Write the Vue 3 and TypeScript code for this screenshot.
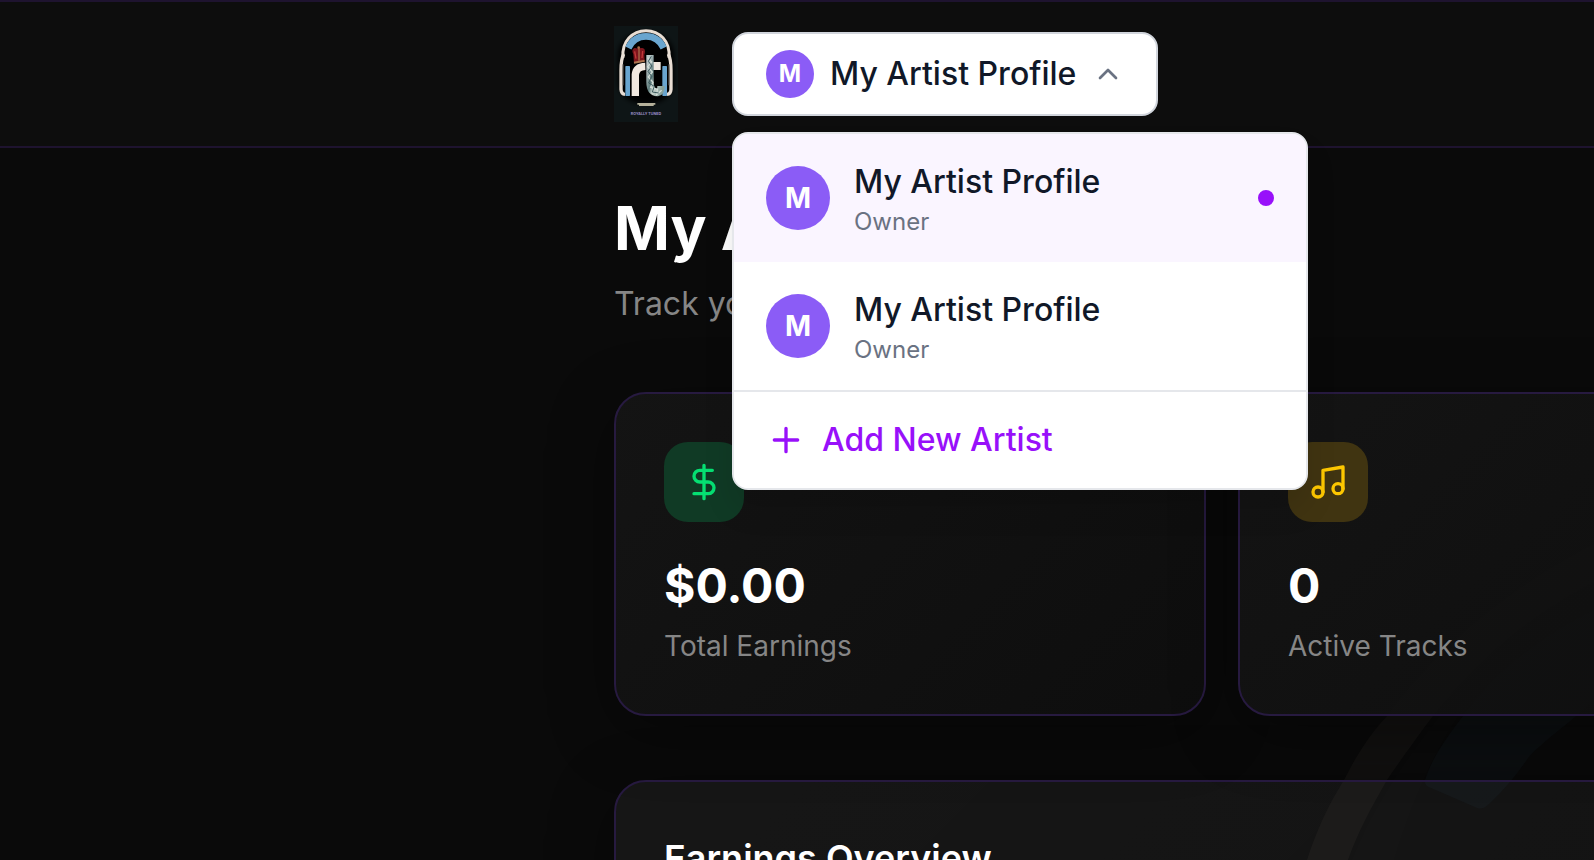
<script setup lang="ts">
import { ref } from 'vue'

interface Artist {
  id: number
  name: string
  role: string
}

const artists: Artist[] = [
  { id: 1, name: 'My Artist Profile', role: 'Owner' },
  { id: 2, name: 'My Artist Profile', role: 'Owner' },
]

const selectedId = ref(1)
const open = ref(true)

const stats = [
  { key: 'earnings', value: '$0.00', label: 'Total Earnings' },
  { key: 'tracks', value: '0', label: 'Active Tracks' },
]

function choose(id: number) {
  selectedId.value = id
  open.value = false
}
</script>

<template>
  <div class="page">
    <svg class="watermark" viewBox="0 0 500 400" aria-hidden="true">
      <path class="mark-cream" d="M213 400C226 360 240 336 250 320C264 292 278 272 293 256C340 192 410 130 500 84V122C430 158 378 206 339 256C318 284 304 304 293 320C276 350 264 372 254 400Z" />
      <path class="mark-shade" d="M300 400C318 340 340 292 364 256L346 256C318 292 282 340 258 400Z" />
      <path class="mark-blue" d="M369 256C352 278 338 298 331 320Q330 326 337 328L383 348Q389 350 395 344C410 330 425 312 434 298C450 280 475 264 500 240V150C440 180 400 214 369 256Z" />
    </svg>

    <header class="topbar">
      <svg class="logo" viewBox="0 0 192 288" role="img" aria-label="Royally Tuned">
        <defs>
          <linearGradient id="silver" x1="0" y1="0" x2="1" y2="1">
            <stop offset="0" stop-color="#b9c5c6" />
            <stop offset="0.4" stop-color="#5d7b7b" />
            <stop offset="0.6" stop-color="#cbd6cf" />
            <stop offset="1" stop-color="#86a09a" />
          </linearGradient>
          <filter id="soft" x="-20%" y="-20%" width="140%" height="140%">
            <feGaussianBlur stdDeviation="8" />
          </filter>
        </defs>
        <rect width="192" height="288" fill="#0e1516" />
        <rect x="12" y="20" width="168" height="212" rx="70" fill="#000" filter="url(#soft)" />
        <path d="M27 96C22 46 56 14 96 14S170 46 165 96" fill="none" stroke="#e9ded4" stroke-width="9" />
        <path d="M43 66C54 42 72 31 96 31S138 42 149 66" fill="none" stroke="#69a5cf" stroke-width="20" />
        <path d="M29 84C20 100 21 120 21 140V190Q22 204 33 205" fill="none" stroke="#e9ded4" stroke-width="10" />
        <path d="M163 84C172 100 171 120 171 140V190Q170 204 159 205" fill="none" stroke="#e9ded4" stroke-width="10" />
        <path d="M27 115V178M165 115V178" stroke="#6b655f" stroke-width="3" />
        <rect x="34" y="120" width="14" height="90" rx="2" fill="#69a5cf" />
        <rect x="145" y="120" width="14" height="90" rx="2" fill="#69a5cf" />
        <path d="M64 210V146Q66 122 94 121" fill="none" stroke="#f1e8df" stroke-width="22" />
        <rect x="117" y="108" width="23" height="24" fill="#f1e8df" />
        <path d="M108 87V168Q108 199 131 200Q141 199 141 180" fill="none" stroke="url(#silver)" stroke-width="22" />
        <path d="M101 95L113 108L101 122L115 138L103 153L117 169L110 184L130 190L128 206L143 193" fill="none" stroke="#d2ddd7" stroke-width="4" />
        <path d="M112 91L103 106L114 120L102 136L113 151L104 171L121 181L115 198L134 201" fill="none" stroke="#3d5b5e" stroke-width="3" />
        <path d="M58 84C50 68 62 62 70 68Q74 60 80 67C92 62 96 76 91 86L92 106L60 112Z" fill="#7d151c" />
        <path d="M62 76L66 98M86 75L84 96" stroke="#c2383a" stroke-width="4" />
        <path d="M75 68V104" stroke="#a66e4c" stroke-width="4" />
        <path d="M60 110L92 104" stroke="#ad7550" stroke-width="6" />
        <circle cx="74" cy="65" r="4" fill="#a66e4c" />
        <path d="M70 231H124V236H119V240H75V236H70Z" fill="#b5b19b" />
        <text x="96" y="267" text-anchor="middle" class="logo-name">ROYALLY TUNED</text>
      </svg>

      <div class="switcher">
        <button class="trigger" type="button" aria-haspopup="true" :aria-expanded="open" @click="open = !open">
          <span class="avatar small">M</span>
          <span>My Artist Profile</span>
          <svg class="chevron" viewBox="0 0 24 24" aria-hidden="true"><path d="m18 15-6-6-6 6" /></svg>
        </button>

        <div v-if="open" class="menu">
          <button
            v-for="artist in artists"
            :key="artist.id"
            type="button"
            class="option"
            :class="{ selected: artist.id === selectedId }"
            @click="choose(artist.id)"
          >
            <span class="avatar">M</span>
            <span class="who">
              <span class="name">{{ artist.name }}</span>
              <span class="role">{{ artist.role }}</span>
            </span>
            <span v-if="artist.id === selectedId" class="dot"></span>
          </button>
          <button class="add" type="button">
            <svg viewBox="0 0 24 24" aria-hidden="true"><path d="M5 12h14M12 5v14" /></svg>
            <span>Add New Artist</span>
          </button>
        </div>
      </div>
    </header>

    <main class="content">
      <h1>My Artist Profile</h1>
      <p class="intro">Track your earnings</p>

      <section class="stats">
        <article v-for="stat in stats" :key="stat.key" class="card stat">
          <div class="badge" :class="stat.key">
            <svg v-if="stat.key === 'earnings'" viewBox="0 0 24 24" aria-hidden="true">
              <path d="M12 2v20M17 5H9.5a3.5 3.5 0 0 0 0 7h5a3.5 3.5 0 0 1 0 7H6" />
            </svg>
            <svg v-else viewBox="0 0 24 24" aria-hidden="true">
              <path d="M9 18V5l12-2v13" />
              <circle cx="6" cy="18" r="3" />
              <circle cx="18" cy="16" r="3" />
            </svg>
          </div>
          <p class="value">{{ stat.value }}</p>
          <p class="label">{{ stat.label }}</p>
        </article>
      </section>

      <section class="card overview">
        <h2>Earnings Overview</h2>
      </section>
    </main>
  </div>
</template>

<style>
body {
  background: #090909;
}
</style>

<style scoped>
* {
  box-sizing: border-box;
}

.page {
  --gutter: 614px;
  position: relative;
  height: 100vh;
  overflow: hidden;
  background: #0a0a0a;
  color: #fff;
  font-family: Inter, 'Liberation Sans', sans-serif;
  font-size: 32px;
  line-height: 48px;
}

h1,
h2,
p {
  margin: 0;
}

button {
  border: 0;
  margin: 0;
  font: inherit;
  text-align: left;
  cursor: pointer;
}

.watermark {
  position: absolute;
  right: 0;
  bottom: 0;
  width: 500px;
  height: 400px;
}

.mark-cream {
  fill: rgba(255, 240, 200, 0.035);
}

.mark-shade {
  fill: rgba(255, 255, 255, 0.008);
}

.mark-blue {
  fill: rgba(100, 180, 240, 0.03);
}

.topbar {
  position: relative;
  z-index: 2;
  display: flex;
  align-items: center;
  gap: 54px;
  padding: 24px 0 24px var(--gutter);
  border-top: 2px solid #1e132f;
  border-bottom: 2px solid #1e132f;
  background: #0d0d0d;
}

.logo {
  width: 64px;
  height: 96px;
}

.logo-name {
  fill: #9a8ec6;
  font-size: 11px;
  font-weight: 700;
}

.switcher {
  position: relative;
}

.trigger {
  display: flex;
  align-items: center;
  gap: 16px;
  padding: 16px 32px;
  border: 2px solid #d1d5dc;
  border-radius: 16px;
  background: #fff;
  color: #101828;
  font-weight: 500;
}

.chevron {
  width: 32px;
  height: 32px;
  fill: none;
  stroke: #6a7282;
  stroke-width: 2;
  stroke-linecap: round;
  stroke-linejoin: round;
}

.avatar {
  display: flex;
  align-items: center;
  justify-content: center;
  flex: none;
  width: 64px;
  height: 64px;
  border-radius: 50%;
  background: #8b5cf6;
  color: #fff;
  font-size: 28px;
  font-weight: 700;
}

.avatar.small {
  width: 48px;
  height: 48px;
  font-size: 24px;
}

.menu {
  position: absolute;
  top: calc(100% + 16px);
  left: 0;
  width: 576px;
  overflow: hidden;
  border: 2px solid #e5e7eb;
  border-radius: 16px;
  background: #fff;
  box-shadow: 0 20px 30px rgba(0, 0, 0, 0.1);
}

.option,
.add {
  display: flex;
  align-items: center;
  width: 100%;
  padding: 24px 32px;
  background: #fff;
}

.option {
  gap: 24px;
}

.option.selected {
  background: #faf5ff;
}

.who {
  display: flex;
  flex: 1;
  flex-direction: column;
}

.name {
  color: #101828;
  font-weight: 500;
}

.role {
  color: #6a7282;
  font-size: 24px;
  line-height: 32px;
}

.dot {
  width: 16px;
  height: 16px;
  border-radius: 50%;
  background: #9810fa;
}

.add {
  gap: 16px;
  border-top: 2px solid #e5e7eb;
  color: #9810fa;
  font-weight: 500;
}

.add svg {
  width: 40px;
  height: 40px;
  fill: none;
  stroke: currentColor;
  stroke-width: 2;
  stroke-linecap: round;
}

.content {
  position: relative;
  z-index: 1;
  padding: 44px 0 0 var(--gutter);
}

h1 {
  font-size: 60px;
  font-weight: 700;
  line-height: 72px;
}

.intro {
  margin-top: 16px;
  color: #868686;
}

.stats {
  display: grid;
  grid-template-columns: repeat(2, 592px);
  gap: 32px;
  margin-top: 64px;
}

.card {
  padding: 48px;
  border: 2px solid #271a40;
  border-radius: 32px;
  background: linear-gradient(135deg, rgba(255, 255, 255, 0.05), rgba(255, 255, 255, 0.03));
  box-shadow: 0 16px 64px rgba(0, 0, 0, 0.4);
}

.stat {
  background: linear-gradient(135deg, rgba(21, 21, 21, 0.9), rgba(14, 14, 14, 0.9));
}

.badge {
  display: flex;
  align-items: center;
  justify-content: center;
  width: 80px;
  height: 80px;
  border-radius: 24px;
}

.badge svg {
  width: 40px;
  height: 40px;
  fill: none;
  stroke: currentColor;
  stroke-width: 2;
  stroke-linecap: round;
  stroke-linejoin: round;
}

.badge.earnings {
  background: #103a25;
  color: #05df72;
}

.badge.tracks {
  background: #403411;
  color: #fdc700;
}

.value {
  margin-top: 32px;
  font-size: 48px;
  font-weight: 700;
  line-height: 64px;
}

.label {
  margin-top: 8px;
  color: #868686;
  font-size: 28px;
  line-height: 40px;
}

.overview {
  width: 1216px;
  min-height: 600px;
  margin-top: 64px;
}

h2 {
  font-size: 36px;
  font-weight: 600;
  line-height: 56px;
}
</style>
